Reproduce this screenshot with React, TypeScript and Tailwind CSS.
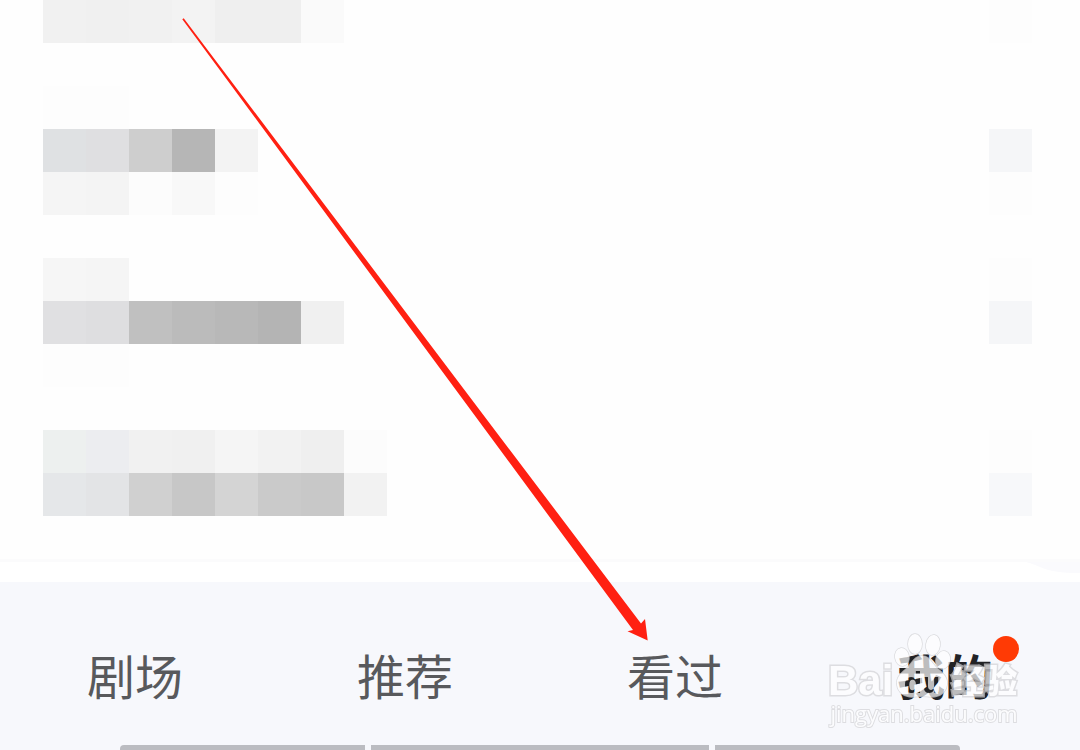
import React from 'react';
import clsx from 'clsx';

interface MosaicRow {
  cells: string[];
  end?: string;
}

// One entry per 43px band, top to bottom
const rows: MosaicRow[] = [
  {
    cells: ['bg-[#f1f1f1]', 'bg-[#f0f0f0]', 'bg-[#f1f1f1]', 'bg-[#f3f3f3]', 'bg-[#efefef]', 'bg-[#efefef]', 'bg-[#fafafa]'],
    end: 'bg-[#fdfdfd]',
  },
  { cells: [] },
  { cells: ['bg-[#fdfdfd]', 'bg-[#fdfdfd]'] },
  {
    cells: ['bg-[#dfe1e3]', 'bg-[#dfdfe1]', 'bg-[#cecece]', 'bg-[#b6b6b6]', 'bg-[#f3f3f3]'],
    end: 'bg-[#f5f6f8]',
  },
  {
    cells: ['bg-[#f5f5f5]', 'bg-[#f4f4f4]', 'bg-[#fcfcfc]', 'bg-[#f8f8f8]', 'bg-[#fdfdfd]'],
    end: 'bg-[#fdfdfd]',
  },
  { cells: [] },
  { cells: ['bg-[#f6f6f6]', 'bg-[#f5f5f5]'], end: 'bg-[#fdfdfd]' },
  {
    cells: ['bg-[#e0e0e2]', 'bg-[#dedee0]', 'bg-[#c0c0c0]', 'bg-[#bbbbbb]', 'bg-[#b8b8b8]', 'bg-[#b4b4b4]', 'bg-[#f0f0f0]'],
    end: 'bg-[#f5f6f8]',
  },
  { cells: ['bg-[#fdfdfd]', 'bg-[#fdfdfd]'] },
  { cells: [] },
  {
    cells: ['bg-[#edf0ef]', 'bg-[#ecedf0]', 'bg-[#f1f1f1]', 'bg-[#f0f0f0]', 'bg-[#f5f5f5]', 'bg-[#f2f2f2]', 'bg-[#efefef]', 'bg-[#fcfcfc]'],
    end: 'bg-[#fdfdfd]',
  },
  {
    cells: ['bg-[#e5e7e9]', 'bg-[#e3e4e6]', 'bg-[#d0d0d0]', 'bg-[#c7c7c7]', 'bg-[#d4d4d4]', 'bg-[#cacaca]', 'bg-[#c8c8c8]', 'bg-[#f2f2f2]'],
    end: 'bg-[#f7f8fa]',
  },
  { cells: [] },
];

const tabs = [
  { label: '剧场' },
  { label: '推荐' },
  { label: '看过' },
  { label: '我的', active: true },
];

function MosaicList() {
  return (
    <div className="pl-[43px] pr-12">
      {rows.map((row, i) => (
        <div key={i} className="flex h-[43px]">
          {row.cells.map((color, j) => (
            <div key={j} className={clsx('w-[43px]', color)} />
          ))}
          {row.end && <div className={clsx('ml-auto w-[43px]', row.end)} />}
        </div>
      ))}
    </div>
  );
}

function TabBar() {
  return (
    <nav className="grid grid-cols-4 pt-15 pb-9">
      {tabs.map((tab) => (
        <button
          key={tab.label}
          type="button"
          aria-current={tab.active ? 'page' : undefined}
          className={clsx(
            'relative justify-self-center text-5xl leading-[64px]',
            tab.active ? 'font-bold text-[#222326]' : 'text-[#58595c]'
          )}
        >
          {tab.label}
          {tab.active && (
            <span className="absolute -top-[6px] -right-[26px] size-[26px] rounded-full bg-[#ff3a05]" />
          )}
        </button>
      ))}
    </nav>
  );
}

function Paw() {
  return (
    <svg className="w-[58px] shrink-0" height="66" viewBox="0 0 58 66" fill="#fff" stroke="#cfcfd2" strokeWidth="1.5">
      <mask id="paw-body">
        <rect width="58" height="66" fill="#fff" stroke="none" />
        <text x="29" y="60" textAnchor="middle" fill="#000" stroke="none" fontSize="30" fontWeight="700" fontFamily="Liberation Sans, sans-serif">du</text>
      </mask>
      <ellipse cx="9" cy="24" rx="7" ry="9" transform="rotate(-10 9 24)" />
      <ellipse cx="22" cy="11" rx="7" ry="10" />
      <ellipse cx="40" cy="12" rx="7" ry="10" transform="rotate(8 40 12)" />
      <ellipse cx="50" cy="27" rx="7" ry="9" transform="rotate(15 50 27)" />
      <path
        mask="url(#paw-body)"
        d="M29 23c-8 0-10 8-16 13-6 5-10 9-9 16 1 8 8 12 15 12 7-1 13-1 20 0 7 0 14-4 15-12 1-7-3-11-9-16-6-5-8-13-16-13z"
      />
    </svg>
  );
}

function Watermark() {
  return (
    <div className="pointer-events-none absolute right-[60px] bottom-[23px] flex w-[192px] flex-col text-white opacity-70 [-webkit-text-stroke:3px_#d3d3d6] [paint-order:stroke_fill]">
      <div className="flex h-[66px] items-end">
        <span className="font-['Liberation_Sans','Noto_Sans_CJK_SC',sans-serif] text-[42px] leading-9 font-bold">Bai</span>
        <Paw />
        <span className="text-[33px] leading-10 font-black">经验</span>
      </div>
      <span className="text-center font-['Open_Sans','Noto_Sans_CJK_SC',sans-serif] text-[22px] leading-7 [-webkit-text-stroke:2px_#d3d3d6]">
        jingyan.baidu.com
      </span>
    </div>
  );
}

function Arrow() {
  return (
    <svg className="pointer-events-none absolute top-[18px] left-[182px]" width="467" height="624" viewBox="0 0 467 624" fill="#ff2012">
      <path d="M0.3 1.2 1.7 0.3 459 605.5 463 601 465.7 622.5 445.5 613.3 451 612z" />
    </svg>
  );
}

export default function App() {
  return (
    <div className="relative flex min-h-screen flex-col overflow-hidden bg-[#fefefe] font-['Noto_Sans_CJK_SC',sans-serif]">
      <MosaicList />

      {/* Card edge above the tab bar */}
      <div className="flex h-[23px] flex-col items-end bg-white">
        <div className="h-[3px] w-full bg-[#fbfbfc]" />
        <svg width="54" height="11" viewBox="0 0 54 11" fill="#fafafd">
          <path d="M0 0h54v11C34 11 24 9 14 5 9 3 5 1 0 0z" />
        </svg>
      </div>

      <footer className="relative flex flex-1 flex-col bg-[#f7f8fc]">
        <TabBar />
        <div className="mt-auto flex h-[5px] justify-center gap-[6px] px-[120px]">
          <div className="w-[245px] rounded-tl bg-[#bbbcc1]" />
          <div className="flex-1 bg-[#bbbcc1]" />
          <div className="w-[245px] rounded-tr bg-[#bbbcc1]" />
        </div>
        <Watermark />
      </footer>

      <Arrow />
    </div>
  );
}
